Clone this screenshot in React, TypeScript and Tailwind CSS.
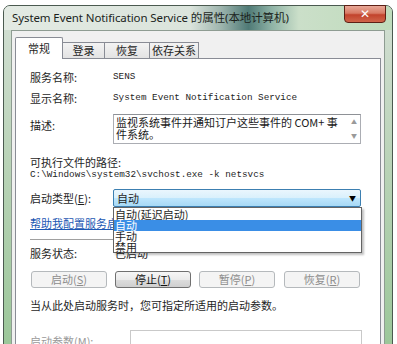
import React from 'react'

const cjk = { fontFamily: '"Microsoft YaHei", "Noto Sans CJK SC", sans-serif' }
const mono = { fontFamily: '"Liberation Mono", "Noto Sans CJK SC", monospace' }

const tabs = [
  { label: '常规', w: 'w-[48px]', active: true },
  { label: '登录', w: 'w-[43px]' },
  { label: '恢复', w: 'w-[46px]' },
  { label: '依存关系', w: 'w-[50px]' },
]

function Btn({ label, mn, disabled, className }: { label: string; mn: string; disabled?: boolean; className?: string }) {
  return (
    <div
      className={
        'h-[17px] w-[76px] rounded-[3px] border flex items-center justify-center text-[11px] leading-none ' +
        (disabled
          ? 'border-[#b5b9bc] bg-[#f4f4f4] text-[#8d8d8d] '
          : 'border-[#707070] bg-[linear-gradient(#f6f6f6_0%,#ebebeb_50%,#dddddd_51%,#cfcfcf_100%)] text-[#111] ') +
        (className ?? '')
      }
    >
      {label}(<span className="underline">{mn}</span>)
    </div>
  )
}

export default function App() {
  return (
    <div className="w-[397px] h-[344px] overflow-hidden bg-white pt-[5px] pl-[3px]" style={cjk}>
      {/* window frame */}
      <div className="w-[390px] h-[400px] rounded-t-[7px] border border-[#4b5a50] bg-[linear-gradient(#d3dfd4_0%,#b9d3b7_40%,#92c390_100%)] flex flex-col">
        {/* title bar */}
        <div className="h-[24px] flex items-start justify-between rounded-t-[6px] bg-[linear-gradient(90deg,#e3eae3_0%,#dbe4dc_48%,#9db4ad_56%,#4f7a76_63%,#8fb3a6_69%,#cbdfc9_76%,#bfdcbc_100%)]">
          <div className="pl-[8px] pt-[5px] text-[11.5px] leading-[14px] text-[#1b1f1c] tracking-[-0.1px]" style={{ fontFamily: '"Noto Sans", "Noto Sans CJK SC", sans-serif' }}>
            System Event Notification Service 的属性(本地计算机)
          </div>
          <div className="mr-[6px] -mt-[1px] w-[42px] h-[18px] rounded-b-[4px] border border-[#5d2015] bg-[linear-gradient(#e8a898_0%,#d87a64_45%,#c2432c_55%,#d0654a_100%)] flex items-center justify-center text-white text-[12px] font-bold leading-none" style={{ fontFamily: '"DejaVu Sans", sans-serif' }}>
            ✕
          </div>
        </div>

        {/* dialog body */}
        <div className="mx-[7px] flex-1 bg-[#f0f0f0] border border-[#8e9c92] pl-[3px] pr-[3px] pt-[6px]">
          {/* tabs */}
          <div className="flex items-end h-[21px]">
            {tabs.map((t) => (
              <div
                key={t.label}
                className={
                  t.w +
                  ' border border-b-0 border-[#898c95] flex items-center text-[11px] leading-none text-[#1e1e1e] ' +
                  (t.active
                    ? 'h-[22px] bg-white relative z-10 -mb-[1px] justify-center pb-[1px] rounded-t-[2px]'
                    : 'h-[16px] bg-[linear-gradient(#f3f3f3,#e3e3e3)] justify-center -ml-[1px]')
                }
              >
                {t.label}
              </div>
            ))}
          </div>

          {/* page */}
          <div className="h-[300px] bg-white border border-[#898c95] pl-[14px] pr-[16px] text-[11px] text-[#1e1e1e]">
            <div className="mt-[11px] h-[14px] flex items-center">
              <div className="w-[83px] leading-none">服务名称:</div>
              <div className="leading-none text-[9.3px]" style={mono}>SENS</div>
            </div>
            <div className="mt-[7px] h-[14px] flex items-center">
              <div className="w-[83px] leading-none">显示名称:</div>
              <div className="leading-none text-[9.3px]" style={mono}>System Event Notification Service</div>
            </div>
            <div className="mt-[9px] flex items-start">
              <div className="w-[83px] leading-none pt-[6px]">描述:</div>
              <div className="w-[248px] h-[30px] border border-[#abadb3] border-t-[#8e9196] flex">
                <div className="flex-1 pl-[2px] pt-[1px] text-[11px] leading-[12px] text-[#1a1a1a]">
                  监视系统事件并通知订户这些事件的 COM+ 事<br />件系统。
                </div>
                <div className="w-[12px] flex flex-col items-center justify-between py-[4px] text-[6px] leading-none text-[#9a9a9a]">
                  <span>▲</span>
                  <span>▼</span>
                </div>
              </div>
            </div>
            <div className="mt-[11px] h-[14px] flex items-center leading-none">可执行文件的路径:</div>
            <div className="mt-[-1px] h-[14px] flex items-center leading-none text-[9.3px]" style={mono}>
              C:\Windows\system32\svchost.exe -k netsvcs
            </div>
            <div className="mt-[7px] h-[18px] flex items-center relative">
              <div className="w-[83px] leading-none">
                启动类型(<span className="underline">E</span>):
              </div>
              <div className="w-[248px] h-[18px] rounded-[2px] border border-[#3c7fb1] bg-[linear-gradient(#eaf6fd_0%,#d9f0fc_50%,#bee6fd_51%,#a7d9f5_100%)] flex items-center justify-between pl-[3px] pr-[4px]">
                <span className="leading-none">自动</span>
                <span className="text-[7px] leading-none text-black">▼</span>
              </div>
              {/* open list */}
              <div className="absolute left-[83px] top-[18px] z-20 w-[249px] h-[46px] bg-white border border-[#646464] shadow-[2px_2px_2px_rgba(0,0,0,0.25)] pt-[1px] flex flex-col text-[11px] leading-[11px]">
                <div className="h-[11px] pl-[1px]">自动(延迟启动)</div>
                <div className="h-[11px] pl-[1px] bg-[#3a8ee6] text-white">自动</div>
                <div className="h-[11px] pl-[1px]">手动</div>
                <div className="h-[11px] pl-[1px]">禁用</div>
              </div>
            </div>
            <div className="mt-[9px] h-[14px] flex items-center leading-none text-[#1c57b3] underline">
              帮助我配置服务启动选项。
            </div>
            <div className="mt-[9px] h-[2px] border-t border-[#a0a0a0] border-b border-b-white w-[332px]" />
            <div className="mt-[5px] h-[14px] flex items-center">
              <div className="w-[85px] leading-none">服务状态:</div>
              <div className="leading-none">已启动</div>
            </div>
            <div className="mt-[11px] flex ml-[1px]">
              <Btn label="启动" mn="S" disabled />
              <Btn label="停止" mn="T" className="ml-[8px]" />
              <Btn label="暂停" mn="P" disabled className="ml-[8px]" />
              <Btn label="恢复" mn="R" disabled className="ml-[9px]" />
            </div>
            <div className="mt-[10px] h-[14px] flex items-center leading-none">
              当从此处启动服务时，您可指定所适用的启动参数。
            </div>
            <div className="mt-[18px] flex items-start">
              <div className="w-[100px] pt-[6px] leading-none text-[#9a9a9a]">
                启动参数(<span className="underline">M</span>):
              </div>
              <div className="w-[232px] h-[22px] border border-[#c9c9c9] bg-white" />
            </div>
          </div>
        </div>
      </div>
    </div>
  )
}
